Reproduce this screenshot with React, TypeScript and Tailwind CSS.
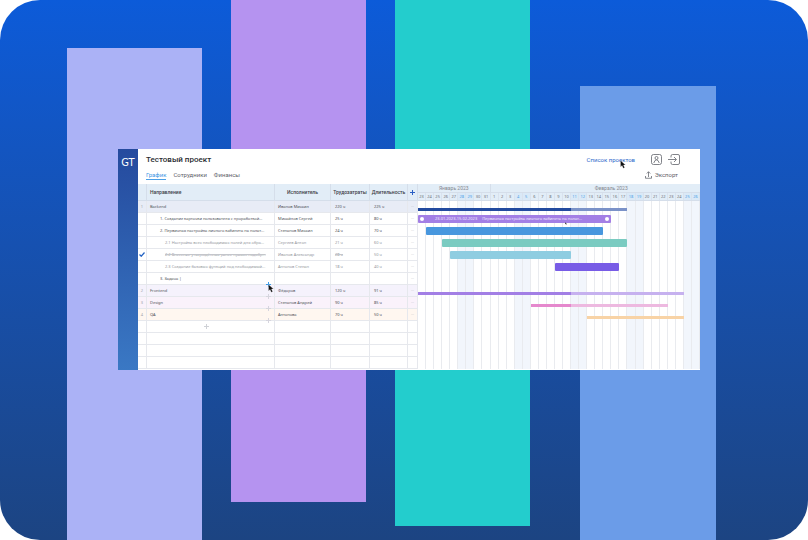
import type { CSSProperties, ReactNode } from "react";

type Row = {
  no?: string;
  name?: string;
  level?: number;
  person?: string;
  effort?: string;
  duration?: string;
  muted?: boolean;
  done?: boolean;
  tint?: string;
  plus?: "blue" | "grey";
  editing?: boolean;
  menu?: boolean;
  adder?: boolean;
};

const rows: Row[] = [
  { no: "1", name: "Backend", person: "Иванов Михаил", effort: "220 ч", duration: "225 ч", tint: "bg-[#e8ecf6]", menu: true },
  { name: "1. Создание карточки пользователя с проработкой...", level: 1, person: "Михайлов Сергей", effort: "25 ч", duration: "80 ч", menu: true },
  { name: "2. Первичная настройка личного кабинета на полат...", level: 1, person: "Степанов Михаил", effort: "24 ч", duration: "70 ч", menu: true },
  { name: "2.1 Настройка всех необходимых полей для обра...", level: 2, person: "Сергеев Антон", effort: "21 ч", duration: "60 ч", muted: true, menu: true },
  { name: "2.2 Внесение утверждённых ранее правок подобр...", level: 2, person: "Иванов Александр", effort: "28 ч", duration: "50 ч", muted: true, done: true, menu: true },
  { name: "2.3 Создание базовых функций под необходимый...", level: 2, person: "Антонов Степан", effort: "18 ч", duration: "40 ч", muted: true, menu: true },
  { name: "3. Задача |", level: 1, editing: true, plus: "blue", menu: true },
  { no: "2", name: "Frontend", person: "Фёдоров", effort: "120 ч", duration: "91 ч", tint: "bg-[#f5f2fc]", plus: "grey", menu: true },
  { no: "3", name: "Design", person: "Степанов Андрей", effort: "90 ч", duration: "85 ч", tint: "bg-[#faf2fb]", plus: "grey", menu: true },
  { no: "4", name: "QA", person: "Антонова", effort: "70 ч", duration: "50 ч", tint: "bg-[#fff7f0]", plus: "grey", menu: true },
  { adder: true },
  {},
  {},
  {},
];

const days = [23, 24, 25, 26, 27, 28, 29, 30, 31, ...Array.from({ length: 26 }, (_, i) => i + 1)];
const isWeekend = (i: number) => i % 7 === 5 || i % 7 === 6;

type Bar = { from: number; to: number; color: string };
const chart: { thin?: boolean; bars: Bar[]; label?: boolean }[] = [
  { thin: true, bars: [{ from: 0, to: 19, color: "bg-[#224a9f]" }, { from: 19, to: 26, color: "bg-[#7b92c8]" }] },
  { label: true, bars: [{ from: 0, to: 24, color: "bg-[#a37fe5]" }] },
  { bars: [{ from: 1, to: 23, color: "bg-[#4897de]" }] },
  { bars: [{ from: 3, to: 26, color: "bg-[#7acbc1]" }] },
  { bars: [{ from: 4, to: 19, color: "bg-[#8fcde1]" }] },
  { bars: [{ from: 17, to: 25, color: "bg-[#785ce6]" }] },
  { bars: [] },
  { thin: true, bars: [{ from: 0, to: 19, color: "bg-[#a27fe5]" }, { from: 19, to: 33, color: "bg-[#c6b1ef]" }] },
  { thin: true, bars: [{ from: 14, to: 19, color: "bg-[#e588cd]" }, { from: 19, to: 31, color: "bg-[#edb9e0]" }] },
  { thin: true, bars: [{ from: 21, to: 33, color: "bg-[#f8d3a6]" }] },
];

const span = (bar: Bar): CSSProperties => ({ gridColumn: `${bar.from + 1} / ${bar.to + 1}` });

function Cursor({ className }: { className: string }) {
  return (
    <svg viewBox="0 0 12 18" className={className} aria-hidden="true">
      <path d="M1 1v13l3-3 2.500 5.500 2.800-1.200L7 10h4z" fill="#111" stroke="#fff" strokeWidth="0.500" />
    </svg>
  );
}

function Plus({ className }: { className: string }) {
  return (
    <svg viewBox="0 0 5 5" className={className} fill="none" stroke="currentColor" strokeWidth="1" shapeRendering="crispEdges" aria-hidden="true">
      <path d="M2.500 0v5M0 2.500h5" />
    </svg>
  );
}

function Cell({ children, className = "" }: { children?: ReactNode; className?: string }) {
  return <td className={`h-[12px] overflow-hidden border-r border-b border-[#e6e8ed] p-0 whitespace-nowrap ${className}`}>{children}</td>;
}

function TaskTable() {
  return (
    <table className="w-[280px] shrink-0 table-fixed border-separate border-spacing-0 font-['Noto_Sans',sans-serif] text-[4px] leading-[10px] text-[#4d5057]">
      <colgroup>
        <col className="w-[9px]" />
        <col className="w-[128px]" />
        <col className="w-[56px]" />
        <col className="w-[39px]" />
        <col className="w-[38px]" />
        <col className="w-[10px]" />
      </colgroup>
      <thead>
        <tr className="bg-[#e2edf7] font-['Roboto',sans-serif] text-[5px] text-[#3d4047]">
          <th className="h-[17px] border-r border-b border-[#d5deea] p-0" />
          <th className="border-r border-b border-[#d5deea] p-0 pl-[3px] text-left font-medium">Направление</th>
          <th className="border-r border-b border-[#d5deea] p-0 font-medium">Исполнитель</th>
          <th className="border-r border-b border-[#d5deea] p-0 font-medium">Трудозатраты</th>
          <th className="border-r border-b border-[#d5deea] p-0 font-medium">Длительность</th>
          <th className="border-r border-b border-[#d5deea] p-0">
            <button type="button" aria-label="Добавить столбец" className="mx-auto block text-[#2b5fc4]">
              <Plus className="size-[5px]" />
            </button>
          </th>
        </tr>
      </thead>
      <tbody>
        {rows.map((row, i) => {
          const tone = row.muted ? "text-[#94979e]" : "";
          const strike = row.done ? "line-through decoration-[#c4c6cb]" : "";
          const indent = row.level === 2 ? "pl-[18px]" : row.level === 1 ? "pl-[13px]" : row.adder ? "pr-[8px]" : "pl-[3px]";
          return (
            <tr key={i} className={row.tint ?? "bg-white"}>
              <Cell className="text-center text-[#a0a3a9]">
                {row.no}
                {row.done && (
                  <label className="grid place-items-center">
                    <input type="checkbox" defaultChecked aria-label="Выполнено" className="col-start-1 row-start-1 size-[6px] appearance-none" />
                    <svg viewBox="0 0 12 10" className="col-start-1 row-start-1 h-[5px] w-[6px]" fill="none" stroke="#2464c4" strokeWidth="2.500">
                      <path d="M1 5l3.500 3.500L11 1" />
                    </svg>
                  </label>
                )}
              </Cell>
              <td className={`relative h-[12px] border-r border-b border-[#e6e8ed] py-0 whitespace-nowrap ${tone} ${strike} ${indent}`}>
                {row.editing ? (
                  <input type="text" aria-label="Название задачи" defaultValue={row.name} className="block h-[10px] w-[60px] bg-transparent outline-none" />
                ) : (
                  row.name
                )}
                {row.adder && (
                  <button type="button" aria-label="Добавить направление" className="mx-auto block text-[#cfd1d6]">
                    <Plus className="size-[5px]" />
                  </button>
                )}
                {row.plus && (
                  <button
                    type="button"
                    aria-label="Добавить задачу"
                    className={`absolute right-[3px] -bottom-[3px] z-10 ${row.plus === "blue" ? "text-[#3b9be8]" : "text-[#d6d5de]"}`}
                  >
                    <Plus className="size-[5px]" />
                  </button>
                )}
                {row.plus === "blue" && <Cursor className="absolute right-0 -bottom-[9px] z-20 h-[9px] w-[6px]" />}
              </td>
              <Cell className={`pl-[3px] ${tone}`}>{row.person}</Cell>
              <Cell className={`pl-[4px] ${tone} ${strike}`}>{row.effort}</Cell>
              <Cell className={`pl-[4px] ${tone}`}>{row.duration}</Cell>
              <Cell className="text-center text-[#b9bcc2]">{row.menu && "···"}</Cell>
            </tr>
          );
        })}
      </tbody>
    </table>
  );
}

function Timeline() {
  return (
    <section aria-label="Диаграмма" className="flex min-w-0 flex-1 flex-col">
      <div className="grid h-[8px] grid-cols-[repeat(35,minmax(0,1fr))] bg-[#e2edf7] text-center text-[5px] leading-[8px] text-[#85888f]">
        <div className="col-span-9 border-r border-[#d5deea]">Январь 2023</div>
        <div className="col-span-26 pl-[32px]">Февраль 2023</div>
      </div>
      <div className="grid h-[9px] grid-cols-[repeat(35,minmax(0,1fr))] border-y border-[#d5deea] bg-[#e2edf7] text-center font-['Noto_Sans',sans-serif] text-[4px] leading-[7px]">
        {days.map((day, i) => (
          <span key={i} className={`border-r border-[#d9e2ee] ${isWeekend(i) ? "bg-[#dae9f7] text-[#4d9fe6]" : "text-[#6d7077]"}`}>
            {day}
          </span>
        ))}
      </div>
      <div className="grid flex-1">
        <div className="col-start-1 row-start-1 grid grid-cols-[repeat(35,minmax(0,1fr))]">
          {days.map((_, i) => (
            <span key={i} className={`border-r border-[#e9ebef] ${isWeekend(i) ? "bg-[#f2f6fc]" : ""}`} />
          ))}
        </div>
        <div className="col-start-1 row-start-1">
          {chart.map((line, i) => (
            <div key={i} className={`grid h-[12px] grid-cols-[repeat(35,minmax(0,1fr))] ${line.thin ? "items-end pb-[2px]" : "items-center"}`}>
              {line.bars.map((bar) => (
                <div
                  key={bar.from}
                  style={span(bar)}
                  className={`${bar.color} ${line.thin ? "h-[3px]" : "h-[8px] rounded-[1px]"} ${line.label ? "relative flex items-center px-[2px] font-['Noto_Sans',sans-serif] text-[4px] leading-[8px] whitespace-nowrap text-[#f1eafc]" : ""}`}
                >
                  {line.label && (
                    <>
                      <span className="size-[4px] rounded-full bg-white" />
                      <span className="ml-[11px]">23.01.2023-15.02.2023</span>
                      <span className="ml-[5px]">Первичная настройка личного кабинета на полат...</span>
                      <span className="ml-auto size-[4px] rounded-full bg-white" />
                      <Cursor className="absolute right-[44px] -bottom-[2px] h-[3px] w-[2px]" />
                    </>
                  )}
                </div>
              ))}
            </div>
          ))}
        </div>
      </div>
    </section>
  );
}

function Header() {
  return (
    <header className="flex h-[35px] justify-between pl-[8px] text-[6px]">
      <div>
        <h1 className="h-[21px] text-[8px] leading-[21px] font-medium text-[#2a2c31]">Тестовый проект</h1>
        <nav className="flex gap-[7px] leading-[9px] text-[#5f626a]">
          <a href="#chart" className="border-b border-[#4a9fe6] text-[#3f98e4]">График</a>
          <a href="#staff">Сотрудники</a>
          <a href="#finance">Финансы</a>
        </nav>
      </div>
      <div className="flex flex-col items-end pr-[20px]">
        <div className="flex h-[21px] items-center">
          <a href="#projects" className="relative mr-[16px] text-[#2e6acb]">
            Список проектов
            <Cursor className="absolute right-[9px] -bottom-[5px] h-[9px] w-[6px]" />
          </a>
          <button type="button" aria-label="Профиль" className="mr-[6px] text-[#6b6e75]">
            <svg viewBox="0 0 22 22" className="size-[11px]" fill="none" stroke="currentColor" strokeWidth="1.700">
              <rect x="1" y="1" width="20" height="20" rx="4" />
              <circle cx="11" cy="8" r="3" />
              <path d="M5.500 18l2.500-5q3-2.500 6 0l2.500 5" />
            </svg>
          </button>
          <button type="button" aria-label="Выйти" className="text-[#6b6e75]">
            <svg viewBox="0 0 24 22" className="h-[11px] w-[12px]" fill="none" stroke="currentColor" strokeWidth="1.700">
              <path d="M6 7V4a3 3 0 0 1 3-3h11a3 3 0 0 1 3 3v14a3 3 0 0 1-3 3H9a3 3 0 0 1-3-3v-3M0 11h16M12 6l5 5-5 5" />
            </svg>
          </button>
        </div>
        <button type="button" className="mr-[2px] flex items-center gap-[3px] leading-[9px] text-[#5f626a]">
          <svg viewBox="0 0 14 16" className="h-[8px] w-[7px]" fill="none" stroke="currentColor" strokeWidth="1.500">
            <path d="M1 10v4.500h12V10M7 12V1.500M3.500 5L7 1.500 10.500 5" />
          </svg>
          Экспорт
        </button>
      </div>
    </header>
  );
}

export default function App() {
  return (
    <main className="grid min-h-screen overflow-hidden rounded-[40px] bg-linear-to-b from-[#0c5bd9] to-[#1c4482] font-['Roboto',sans-serif]">
      <div aria-hidden="true" className="col-start-1 row-start-1 flex">
        <div className="mt-[48px] ml-[8.25%] w-[16.8%] bg-[#abb2f6]" />
        <div className="mb-[38px] ml-[3.5%] w-[16.8%] bg-[#b593f0]" />
        <div className="mb-[14px] ml-[3.5%] w-[16.8%] bg-[#23cdcd]" />
        <div className="mt-[86px] ml-[6.2%] w-[16.8%] bg-[#6b9ce8]" />
      </div>
      <div className="col-start-1 row-start-1 mt-[149px] mr-[108px] mb-[40px] ml-[118px] flex self-start bg-white">
        <aside className="w-[20px] shrink-0 bg-linear-to-b from-[#254a9e] to-[#3a78c4] pt-[6px] text-center font-['DejaVu_Sans_Condensed','DejaVu_Sans',sans-serif] text-[11px] leading-[16px] text-white">
          GT
        </aside>
        <div className="min-w-0 flex-1 pb-px">
          <Header />
          <div className="flex">
            <TaskTable />
            <Timeline />
          </div>
        </div>
      </div>
    </main>
  );
}
